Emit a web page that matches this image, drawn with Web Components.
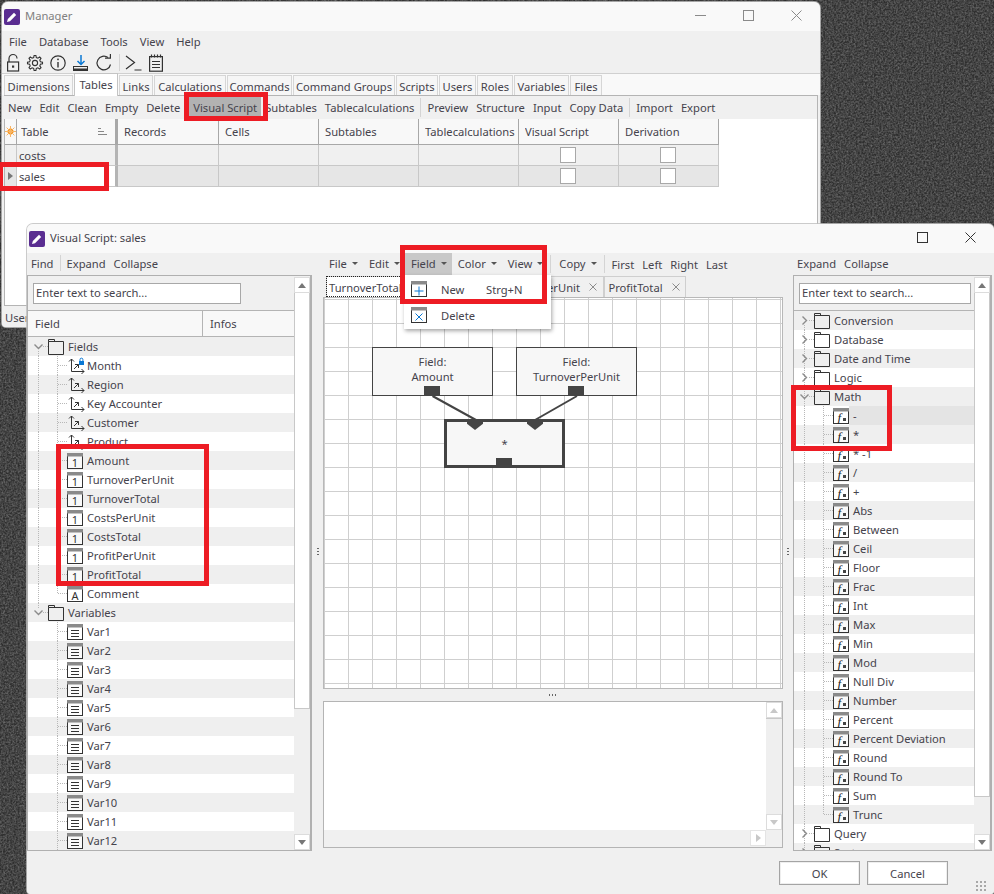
<!DOCTYPE html>
<html>
<head>
<meta charset="utf-8">
<title>Manager</title>
<style>
  html, body { margin: 0; height: 100%; overflow: hidden; }
  body { font: 11.2px "Noto Sans", "Open Sans", sans-serif; color: #45434c; }
</style>
</head>
<body>
<x-desktop>

  <x-window title-text="Manager" dim style="left:2px;top:2px;width:818px;height:325px">
    <x-bar h="21" style="padding-left:1px">
      <x-tool menu>File</x-tool><x-tool menu>Database</x-tool><x-tool menu>Tools</x-tool><x-tool menu>View</x-tool><x-tool menu>Help</x-tool>
    </x-bar>
    <x-iconbar></x-iconbar>
    <x-tabstrip>
      <x-tab style="width:69px">Dimensions</x-tab><x-tab active style="width:44px">Tables</x-tab><x-tab style="width:34px">Links</x-tab><x-tab style="width:72px">Calculations</x-tab><x-tab style="width:65px">Commands</x-tab><x-tab style="width:102px">Command Groups</x-tab><x-tab style="width:42px">Scripts</x-tab><x-tab style="width:37px">Users</x-tab><x-tab style="width:36px">Roles</x-tab><x-tab style="width:55px">Variables</x-tab><x-tab style="width:32px">Files</x-tab>
    </x-tabstrip>
    <x-content>
      <x-bar h="23" style="margin-left:-1px">
        <x-tool>New</x-tool><x-tool>Edit</x-tool><x-tool>Clean</x-tool><x-tool>Empty</x-tool><x-tool>Delete</x-tool><x-sep></x-sep>
        <x-tool active>Visual Script</x-tool><x-tool>Subtables</x-tool><x-tool>Tablecalculations</x-tool><x-sep></x-sep>
        <x-tool>Preview</x-tool><x-tool>Structure</x-tool><x-tool>Input</x-tool><x-tool>Copy Data</x-tool><x-sep></x-sep>
        <x-tool>Import</x-tool><x-tool>Export</x-tool>
      </x-bar>
      <x-table></x-table>
    </x-content>
    <x-status>User</x-status>
  </x-window>

  <x-window title-text="Visual Script: sales" modal style="left:27px;top:224px;width:967px;height:670px">
    <x-dialog-body>
      <x-panel slot="left" columns="Field,Infos" thumb="416">
        <x-bar slot="bar" h="22" style="padding-bottom:2px">
          <x-tool>Find</x-tool><x-sep></x-sep><x-tool>Expand</x-tool><x-tool>Collapse</x-tool>
        </x-bar>
        <x-tree id="fields"></x-tree>
      </x-panel>

      <x-middle slot="middle">
        <x-bar slot="bar" h="22">
          <x-tool drop>File</x-tool><x-tool drop>Edit</x-tool><x-tool drop active>Field</x-tool><x-tool drop>Color</x-tool><x-tool drop>View</x-tool><x-sep></x-sep>
          <x-tool drop>Copy</x-tool><x-sep style="margin-right:3px"></x-sep>
          <x-tool>First</x-tool><x-tool>Left</x-tool><x-tool>Right</x-tool><x-tool>Last</x-tool>
        </x-bar>
        <x-tabstrip slot="tabs" small>
          <x-tab focus closable style="width:78px">TurnoverTotal</x-tab><x-tab closable style="width:85px;visibility:hidden"></x-tab><x-tab closable style="width:115px;justify-content:flex-end">erUnit</x-tab><x-tab closable style="width:82px">ProfitTotal</x-tab>
        </x-tabstrip>
        <x-canvas slot="canvas">
          <x-node x="48" y="49" w="121" h="49">Field:<br>Amount</x-node>
          <x-node x="192" y="49" w="121" h="49">Field:<br>TurnoverPerUnit</x-node>
          <x-node x="120" y="121" w="121" h="49" sel>*</x-node>
        </x-canvas>
        <x-editor slot="editor"></x-editor>
      </x-middle>

      <x-panel slot="right" thumb="504">
        <x-bar slot="bar" h="22" style="padding-bottom:2px">
          <x-tool>Expand</x-tool><x-tool>Collapse</x-tool>
        </x-bar>
        <x-tree id="funcs"></x-tree>
      </x-panel>

      <x-btn slot="footer">OK</x-btn>
      <x-btn slot="footer">Cancel</x-btn>
    </x-dialog-body>
    <x-menu style="left:377px;top:51px"></x-menu>
  </x-window>

  <x-mark style="left:-2px;top:162px;width:111px;height:29px"></x-mark>
  <x-mark style="left:184px;top:92px;width:84px;height:29px"></x-mark>
  <x-mark style="left:400px;top:245px;width:147px;height:59px"></x-mark>
  <x-mark style="left:56px;top:444px;width:153px;height:142px"></x-mark>
  <x-mark style="left:791px;top:385px;width:101px;height:66px"></x-mark>
</x-desktop>

<script>
// gear outline, generated so the teeth stay even
function gearPath(cx, cy, r1, r2, n) {
  let d = '';
  for (let i = 0; i < n; i++) {
    const a = (i / n) * Math.PI * 2, w = Math.PI / n / 2;
    const pts = [[r1, a - w * 1.2], [r2, a - w * 0.6], [r2, a + w * 0.6], [r1, a + w * 1.2]];
    pts.forEach((p, k) => {
      d += (i === 0 && k === 0 ? 'M' : 'L') + (cx + p[0] * Math.cos(p[1])).toFixed(1) + ' ' + (cy + p[0] * Math.sin(p[1])).toFixed(1);
    });
  }
  return d + 'Z';
}

const frame = (inner) => `<svg width="16" height="16" viewBox="0 0 16 16"><rect x=".5" y=".5" width="15" height="15" fill="#fff" fill-opacity=".6" stroke="#333"/><rect width="16" height="3.5" fill="#8a8a8a"/>${inner}</svg>`;
const glyph = (t) => `<text x="8" y="14" text-anchor="middle" font-family="Noto Sans, sans-serif" font-size="11" fill="#333">${t}</text>`;
const axes = `<path d="M4.5 1v12.5H17M2 3.5l2.5-2.5L7 3.5M14.5 11l2.5 2.5-2.5 2.5"/><path d="M7 11l4.5-4.5M8 6.5h3.5V10"/>`;

const ICONS = {
  lock: `<svg width="16" height="20" viewBox="0 0 16 20" fill="none" stroke="#333" stroke-width="1.2"><path d="M4 9V5.5a4 4 0 0 1 8 0"/><rect x="2.6" y="9" width="11" height="9"/><rect x="7" y="12.5" width="2.2" height="2.2" fill="#333" stroke="none"/></svg>`,
  gear: `<svg width="18" height="20" viewBox="0 0 18 20" fill="none" stroke="#333" stroke-width="1.1"><path d="${gearPath(9, 10, 5.6, 7.6, 8)}"/><circle cx="9" cy="10" r="2.6"/></svg>`,
  info: `<svg width="18" height="20" viewBox="0 0 18 20" fill="none" stroke="#333" stroke-width="1.2"><circle cx="9" cy="10" r="7.2"/><path d="M9 9v5.5" stroke-width="1.4"/><rect x="8.2" y="5.6" width="1.6" height="1.6" fill="#333" stroke="none"/></svg>`,
  download: `<svg width="18" height="20" viewBox="0 0 18 20" fill="none"><path d="M9 2v9M5.5 8l3.5 3.5L12.5 8" stroke="#0a78d4" stroke-width="1.5"/><rect x="1.5" y="13.5" width="14" height="4" stroke="#333" stroke-width="1"/><rect x="1.5" y="15.5" width="14" height="2" fill="#333"/></svg>`,
  refresh: `<svg width="18" height="20" viewBox="0 0 18 20" fill="none" stroke="#333" stroke-width="1.2"><path d="M15.5 11.5A6.8 6.8 0 1 1 13 4.6"/><path d="M10 5.2h5.4V1"/></svg>`,
  terminal: `<svg width="18" height="20" viewBox="0 0 18 20" fill="none" stroke="#333" stroke-width="1.2"><path d="M1 3l8.5 6.5L1 16"/><path d="M9.5 17h7"/></svg>`,
  note: `<svg width="16" height="20" viewBox="0 0 16 20" fill="none" stroke="#333" stroke-width="1.2"><rect x="1.6" y="3.6" width="12.8" height="14.6"/><path d="M3.5 1.5v3M6.5 1.5v3M9.5 1.5v3M12.5 1.5v3M4 8.5h8M4 11.5h8M4 14.5h8"/></svg>`,
  folder: `<svg width="16" height="16" viewBox="0 0 16 16" fill="none" stroke="#333"><path d="M.5 2.5V15.5H15.5V2.5ZM.5 2.5V.5H6.5V2.5"/></svg>`,
  dim: `<svg width="18" height="16" viewBox="0 0 18 16" fill="none" stroke="#333" style="margin-right:-2px">${axes}</svg>`,
  dimlock: `<svg width="18" height="16" viewBox="0 0 18 16" fill="none" stroke="#333" style="margin-right:-2px;overflow:visible">${axes}<rect x="12" y="3" width="5" height="4" fill="#0a78d4" stroke="none"/><path d="M13 3.2V1.6a1.4 1.4 0 0 1 2.9 0v1.6" stroke="#0a78d4"/></svg>`,
  num: frame(glyph('1')),
  alpha: frame(glyph('A')),
  vars: frame('<path d="M4 6.5h8M4 9.5h8M4 12.5h8" stroke="#333"/>'),
  fx: frame(`<text x="4.5" y="13.5" font-family="Liberation Serif, serif" font-style="italic" font-size="13" fill="#222">f</text><rect x="10" y="10" width="3" height="3" fill="#444"/>`),
  plus: `<svg width="16" height="16" viewBox="0 0 16 16"><rect x=".5" y=".5" width="15" height="15" fill="#fff" stroke="#333"/><rect width="16" height="3.5" fill="#8a8a8a"/><path d="M8 5.5v9M3.5 10h9" stroke="#0a78d4"/></svg>`,
  cross: `<svg width="16" height="16" viewBox="0 0 16 16"><rect x=".5" y=".5" width="15" height="15" fill="#fff" stroke="#333"/><rect width="16" height="3.5" fill="#8a8a8a"/><path d="M4.5 6.5l7 7M11.5 6.5l-7 7" stroke="#0a78d4"/></svg>`
};

class XDesktop extends HTMLElement {
  constructor() {
    super();
    this.attachShadow({mode: 'open'});
    this.shadowRoot.innerHTML = `
      <style>
        :host { display: block; position: relative; width: 994px; height: 894px; overflow: hidden; background: #3c3c3c; }
        svg { position: absolute; inset: 0; }
      </style>
      <svg width="994" height="894">
        <filter id="grain"><feTurbulence type="fractalNoise" baseFrequency=".55" numOctaves="3" seed="4"/>
          <feColorMatrix values="0 0 0 0 .24  0 0 0 0 .24  0 0 0 0 .24  1.1 0 0 0 -.3"/></filter>
        <rect width="994" height="894" fill="#2e2e2e"/>
        <rect width="994" height="894" fill="#6a6a6a" filter="url(#grain)"/>
      </svg>
      <slot></slot>`;
  }
}

class XWindow extends HTMLElement {
  constructor() {
    super();
    this.attachShadow({mode: 'open'});
    this.shadowRoot.innerHTML = `
      <style>
        :host { display: flex; flex-direction: column; position: absolute; background: #f0f0f0; border-radius: 6px 6px 4px 4px; overflow: hidden; box-shadow: 0 0 0 1px rgba(190,190,190,.8); }
        header { flex: none; height: 29px; display: flex; align-items: center; background: #f9f9f9; padding-left: 2px; }
        .logo { width: 16px; height: 16px; margin-right: 5px; border-radius: 2px; background: #5a2d91; display: flex; align-items: center; justify-content: center; }
        .name { flex: 1; padding-bottom: 3px; }
        .ctl { display: flex; align-items: center; }
        .ctl svg { display: block; stroke: currentColor; fill: none; }
        .ctl span { width: 48px; height: 29px; display: flex; align-items: center; justify-content: center; padding-bottom: 2px; box-sizing: border-box; }
        :host([dim]) .name { color: #808080; }
        :host([dim]) .ctl { color: #8a8a8a; }
        :host([modal]) .ctl { color: #333; }
        main { flex: 1; min-height: 0; display: flex; flex-direction: column; }
      </style>
      <header>
        <span class="logo"><svg width="12" height="12" viewBox="0 0 12 12"><path d="M1 11l.8-3L8 1.8 10.2 4 4 10.2z" fill="#fff"/></svg></span>
        <span class="name"></span>
        <span class="ctl">
          <span class="min"><svg width="11" height="11"><path d="M0 5.5h11"/></svg></span>
          <span><svg width="11" height="11"><rect x=".5" y=".5" width="10" height="10"/></svg></span>
          <span><svg width="11" height="11"><path d="M.5 .5l10 10M10.5 .5l-10 10"/></svg></span>
        </span>
      </header>
      <main><slot></slot></main>`;
  }
  connectedCallback() {
    this.shadowRoot.querySelector('.name').textContent = this.getAttribute('title-text');
    if (this.hasAttribute('modal')) {
      this.shadowRoot.querySelector('.min').style.display = 'none';
    }
  }
}

class XBar extends HTMLElement {
  constructor() {
    super();
    this.attachShadow({mode: 'open'});
    this.shadowRoot.innerHTML = `
      <style>
        :host { display: flex; flex: none; align-items: stretch; background: #f0f0f0; white-space: nowrap; box-sizing: border-box; }
      </style>
      <slot></slot>`;
  }
  connectedCallback() {
    this.style.height = (this.getAttribute('h') || 22) + 'px';
  }
}

class XTool extends HTMLElement {
  constructor() {
    super();
    this.attachShadow({mode: 'open'});
    this.shadowRoot.innerHTML = `
      <style>
        :host { display: flex; align-items: center; padding: 0 4px; }
        :host([menu]) { padding: 0 6px; }
        :host([active]) { background: #b2b2b2; }
        :host([drop]) { padding: 0 5px 2px 6px; gap: 5px; }
        :host([drop][active]) { background: #c8c8c8; }
        i { display: none; width: 0; height: 0; border: 3px solid transparent; border-top: 3px solid #555; border-bottom: 0; }
        :host([drop]) i { display: block; }
      </style>
      <slot></slot><i></i>`;
  }
}

class XSep extends HTMLElement {
  constructor() {
    super();
    this.attachShadow({mode: 'open'});
    this.shadowRoot.innerHTML = `
      <style>
        :host { display: block; width: 1px; margin: 2px 2px; background: #d4d4d4; flex: none; }
      </style>`;
  }
}

class XIconbar extends HTMLElement {
  constructor() {
    super();
    this.attachShadow({mode: 'open'});
    const names = ['lock', 'gear', 'info', 'download', 'refresh', 'terminal', 'note'];
    this.shadowRoot.innerHTML = `
      <style>
        :host { display: flex; flex: none; height: 21px; padding-left: 3px; gap: 5px; align-items: center; background: #f0f0f0; border-bottom: 1px solid #d0d0d0; }
        svg { display: block; }
        b { width: 1px; height: 17px; background: #d4d4d4; margin: 0 0 0 1px; }
      </style>
      ${names.map(n => (n === 'terminal' ? '<b></b>' : '') + ICONS[n]).join('')}`;
  }
}

class XTabstrip extends HTMLElement {
  constructor() {
    super();
    this.attachShadow({mode: 'open'});
    this.shadowRoot.innerHTML = `
      <style>
        :host { display: flex; flex: none; height: 21px; padding-left: 2px; gap: 1px; align-items: flex-end; background: #f9f9f9; position: relative; z-index: 1; }
        :host([small]) { height: 22px; background: #f0f0f0; padding-left: 3px; gap: 0; }
      </style>
      <slot></slot>`;
  }
}

class XTab extends HTMLElement {
  constructor() {
    super();
    this.attachShadow({mode: 'open'});
    this.shadowRoot.innerHTML = `
      <style>
        :host { display: flex; flex: none; align-items: center; justify-content: center; height: 20px; padding-top: 1px; box-sizing: border-box; white-space: nowrap; background: #f6f6f6; border: 1px solid #d6d6d6; border-bottom: 0; }
        :host([active]) { height: 23px; margin-bottom: -1px; padding-top: 0; padding-bottom: 2px; background: #fff; border-color: #c4c4c4; }
        :host([focus]) { height: 22px; background: #fff; outline: 1px dotted #222; outline-offset: -1px; border-color: transparent; justify-content: flex-start; padding-left: 2px !important; }
        svg { display: none; flex: none; }
        :host([closable]) { height: 21px; background: #f0f0f0; border-color: #cfcfcf; padding: 0 6px 0 4px; gap: 9px; }
        :host([focus][closable]) { background: #fff; }
        :host([closable]) svg { display: block; }
        :host([focus]) svg { display: none; }
      </style>
      <slot></slot><svg width="8" height="8"><path d="M.5 .5l7 7M7.5 .5l-7 7" stroke="#8c8c8c"/></svg>`;
  }
}

class XContent extends HTMLElement {
  constructor() {
    super();
    this.attachShadow({mode: 'open'});
    this.shadowRoot.innerHTML = `
      <style>
        :host { display: flex; flex-direction: column; flex: none; height: 211px; margin: 0 2px; border: 1px solid #b4b4b4; background: #fff; box-sizing: border-box; }
      </style>
      <slot></slot>`;
  }
}

class XTable extends HTMLElement {
  constructor() {
    super();
    this.attachShadow({mode: 'open'});
    const cols = ['Records', 'Cells', 'Subtables', 'Tablecalculations', 'Visual Script', 'Derivation'];
    const row = (name, cur, shade) => `
      <div class="ind ${shade}">${cur ? '<u></u>' : ''}</div>
      <div class="name ${cur ? 'cur' : shade}">${name}</div>
      <div class="c ${shade}"></div><div class="c ${shade}"></div><div class="c ${shade}"></div><div class="c ${shade}"></div>
      <div class="c ${shade}"><s></s></div><div class="c ${shade}"><s></s></div>`;
    this.shadowRoot.innerHTML = `
      <style>
        :host { display: grid; grid-template-columns: 12px 101px 101px repeat(5, 100px); grid-template-rows: 26px 21px 21px; width: max-content; }
        div { box-sizing: border-box; border-right: 1px solid #c8c8c8; border-bottom: 1px solid #c8c8c8; display: flex; align-items: center; min-width: 0; overflow: hidden; white-space: nowrap; }
        .h { background: #f8f8f8; border-color: #a8a8a8; padding-left: 6px; justify-content: flex-start; }
        .h span { overflow: hidden; }
        .first { padding-left: 4px; justify-content: space-between; padding-right: 8px; border-right: 3px solid #a8a8a8; }
        .ind { background: #f4f4f4; justify-content: center; padding: 0; }
        .name { padding-left: 2px; border-right: 3px solid #b4b4b4; }
        .a { background: #f0f0f0; } .b { background: #e6e6e6; } .cur { background: #fff; }
        .c { justify-content: center; }
        s { display: block; width: 16px; height: 16px; box-sizing: border-box; background: #fff; border: 1px solid #a8a8a8; margin-right: 1px; }
        u { display: block; width: 0; height: 0; border: 4px solid transparent; border-left: 5px solid #777; border-right: 0; }
        svg { display: block; }
      </style>
      <div class="h" style="padding:0;justify-content:center"><svg width="11" height="11" viewBox="0 0 11 11"><circle cx="5.5" cy="5.5" r="3" fill="#f7941d"/><path d="M5.5 0v11M0 5.5h11M1.6 1.6l7.8 7.8M9.4 1.6l-7.8 7.8" stroke="#f7b565"/></svg></div>
      <div class="h first"><span>Table</span><svg width="9" height="7"><path d="M0 .5h3M0 3.5h6M0 6.5h9" stroke="#888"/></svg></div>
      ${cols.map(c => `<div class="h"><span>${c}</span></div>`).join('')}
      ${row('costs', false, 'a')}
      ${row('sales', true, 'b')}`;
  }
}

class XStatus extends HTMLElement {
  constructor() {
    super();
    this.attachShadow({mode: 'open'});
    this.shadowRoot.innerHTML = `
      <style>
        :host { display: block; padding: 4px 3px; background: #f0f0f0; }
      </style>
      <slot></slot>`;
  }
}

class XDialogBody extends HTMLElement {
  constructor() {
    super();
    this.attachShadow({mode: 'open'});
    this.shadowRoot.innerHTML = `
      <style>
        :host { display: grid; flex: 1; min-height: 0; grid-template-columns: 285px 11px 460px 10px 199px; grid-template-rows: 598px 1fr; background: #f0f0f0; }
        .split { display: flex; align-items: center; justify-content: center; }
        .split i { width: 2px; height: 8px; background: repeating-linear-gradient(#666 0 1px, transparent 1px 3px); }
        footer { grid-column: 1 / -1; display: flex; justify-content: flex-end; gap: 7px; padding: 10px 44px 0 0; box-sizing: border-box; position: relative; }
        .grip { position: absolute; right: 4px; bottom: 3px; width: 12px; height: 10px; background: radial-gradient(circle at 1px 1px, #a8a8a8 1px, transparent 1.2px) 0 0 / 4px 4px; }
      </style>
      <slot name="left"></slot>
      <div class="split"><i></i></div>
      <slot name="middle"></slot>
      <div class="split"><i></i></div>
      <slot name="right"></slot>
      <footer><slot name="footer"></slot><div class="grip"></div></footer>`;
  }
}

class XScrollbar extends HTMLElement {
  constructor() {
    super();
    this.attachShadow({mode: 'open'});
    this.shadowRoot.innerHTML = `
      <style>
        :host { display: flex; flex-direction: column; flex: none; width: 16px; background: #efefef; }
        .btn { flex: none; height: 16px; background: #fff; display: flex; align-items: center; justify-content: center; border: 1px solid #dcdcdc; box-sizing: border-box; }
        .thumb { flex: none; background: #fff; border: 1px solid #c8c8c8; border-width: 0 1px 1px; box-sizing: border-box; }
        .gap { flex: 1; }
        .up { width: 0; height: 0; border: 4px solid transparent; border-top: 0; border-bottom: 5px solid var(--arrow, #777); }
        .dn { width: 0; height: 0; border: 4px solid transparent; border-bottom: 0; border-top: 5px solid var(--arrow, #777); }
      </style>
      <div class="btn"><i class="up"></i></div>
      <div class="thumb"></div>
      <div class="gap"></div>
      <div class="btn"><i class="dn"></i></div>`;
  }
  set thumb(v) {
    this.shadowRoot.querySelector('.thumb').style.height = v + 'px';
  }
}

class XPanel extends HTMLElement {
  constructor() {
    super();
    this.attachShadow({mode: 'open'});
    this.shadowRoot.innerHTML = `
      <style>
        :host { display: flex; flex-direction: column; min-height: 0; min-width: 0; }
        .frame { flex: 1; min-height: 0; display: flex; border: solid #b0b0b0; border-width: 1px 0 1px 1px; }
        .left { flex: 1; min-width: 0; display: flex; flex-direction: column; }
        .search { flex: none; height: 35px; padding: 7px 0 0 5px; box-sizing: border-box; border-bottom: 1px solid #b4b4b4; }
        .search span { display: block; box-sizing: border-box; height: 21px; line-height: 18px; padding-left: 2px; background: #fff; border: 1px solid #a8a8a8; }
        .head { flex: none; height: 26px; display: none; background: #f8f8f8; border-bottom: 1px solid #b4b4b4; box-sizing: border-box; }
        .head span { display: flex; align-items: center; padding-left: 7px; border-right: 1px solid #b4b4b4; box-sizing: border-box; }
        .head span:first-child { width: 175px; } .head span:last-child { flex: 1; border: 0; }
        .body { flex: 1; min-height: 0; overflow: hidden; background: #fff; }
        .sb { width: 18px; flex: none; border-right: 2px solid #b0b0b0; box-sizing: border-box; padding-top: 1px; display: flex; }
      </style>
      <slot name="bar"></slot>
      <div class="frame">
        <div class="left">
          <div class="search"><span class="input">Enter text to search...</span></div>
          <div class="head"></div>
          <div class="body"><slot></slot></div>
        </div>
        <div class="sb"><x-scrollbar></x-scrollbar></div>
      </div>`;
  }
  connectedCallback() {
    const cols = this.getAttribute('columns');
    const s = this.shadowRoot;
    s.querySelector('x-scrollbar').thumb = this.getAttribute('thumb');
    if (cols) {
      const head = s.querySelector('.head');
      head.style.display = 'flex';
      head.innerHTML = cols.split(',').map(c => `<span>${c}</span>`).join('');
      s.querySelector('.input').style.width = '208px';
    } else {
      s.querySelector('.input').style.width = '172px';
    }
  }
}

class XTree extends HTMLElement {
  constructor() {
    super();
    this.attachShadow({mode: 'open'});
    this.shadowRoot.innerHTML = `
      <style>
        :host { display: block; }
      </style>
      <slot></slot>`;
  }
}

class XTreeRow extends HTMLElement {
  constructor() {
    super();
    this.attachShadow({mode: 'open'});
    this.shadowRoot.innerHTML = `
      <style>
        :host { display: flex; align-items: center; height: 19px; background: #fff; white-space: nowrap; overflow: hidden; }
        :host([alt]) { background: #efefef; }
        svg { display: block; flex: none; }
        .guide, .ico { flex: none; display: block; }
        .lab { flex: 1; align-self: stretch; display: flex; align-items: center; padding-left: 4px; }
        :host([selected]) .lab { background: #e4e4e4; }
      </style>
      <span class="guide"></span><span class="ico"></span><span class="lab"><slot></slot></span>`;
  }
  connectedCallback() {
    const lvl = +this.getAttribute('level');
    const open = this.getAttribute('state');
    const cont = this.hasAttribute('cont');
    const last = this.hasAttribute('last');
    const first = this.hasAttribute('first');
    const dot = 'stroke="#b8b8b8" stroke-dasharray="1 1"';
    let g = '';
    if (lvl === 0) {
      if (!first || cont) g += `<path d="M10.5 ${first ? 14 : 0}V${cont ? 19 : 5}" ${dot}/>`;
      g += `<path d="M15 9.5h5" ${dot}/>`;
      g += open === 'open'
        ? `<path d="M6.5 7.5l4 4 4-4" fill="none" stroke="#8c8c8c" stroke-width="1.4"/>`
        : `<path d="M8.5 5.5l4 4-4 4" fill="none" stroke="#8c8c8c" stroke-width="1.4"/>`;
      g = `<svg width="20" height="19">${g}</svg>`;
    } else {
      if (cont) g += `<path d="M10.5 0V19" ${dot}/>`;
      g += `<path d="M29.5 0V${last ? 10 : 19}M30 9.5h9" ${dot}/>`;
      g = `<svg width="39" height="19">${g}</svg>`;
    }
    this.shadowRoot.querySelector('.guide').innerHTML = g;
    this.shadowRoot.querySelector('.ico').innerHTML = ICONS[this.getAttribute('icon')];
  }
}

class XMiddle extends HTMLElement {
  constructor() {
    super();
    this.attachShadow({mode: 'open'});
    this.shadowRoot.innerHTML = `
      <style>
        :host { display: flex; flex-direction: column; min-height: 0; min-width: 0; }
        .split { flex: none; height: 12px; display: flex; align-items: center; justify-content: center; }
        .split i { width: 8px; height: 2px; background: repeating-linear-gradient(90deg, #666 0 1px, transparent 1px 3px); }
      </style>
      <slot name="bar"></slot>
      <slot name="tabs"></slot>
      <slot name="canvas"></slot>
      <div class="split"><i></i></div>
      <slot name="editor"></slot>`;
  }
}

class XCanvas extends HTMLElement {
  constructor() {
    super();
    this.attachShadow({mode: 'open'});
    this.shadowRoot.innerHTML = `
      <style>
        :host { display: block; flex: none; height: 392px; box-sizing: border-box; position: relative; overflow: hidden; border: 1px solid #b8b8b8;
          background-color: #fff;
          background-image: linear-gradient(90deg, #cfcfcf 1px, transparent 1px), linear-gradient(#cfcfcf 1px, transparent 1px);
          background-size: 24px 24px; background-position: 0 1px; }
        svg { position: absolute; left: 0; top: 0; }
      </style>
      <svg width="458" height="390"><path d="M108.5 98L152 122M253 98L211 122" stroke="#444" stroke-width="2" fill="none"/></svg>
      <slot></slot>`;
  }
}

class XNode extends HTMLElement {
  constructor() {
    super();
    this.attachShadow({mode: 'open'});
    this.shadowRoot.innerHTML = `
      <style>
        :host { position: absolute; box-sizing: border-box; display: flex; align-items: center; justify-content: center; text-align: center; line-height: 15px; background: #f7f7f7; border: 1px solid #444; padding-bottom: 6px; }
        :host([sel]) { border: 3px solid #444; padding-bottom: 0; }
        .out { position: absolute; width: 16px; height: 9px; background: #444; bottom: 0; }
        .in { position: absolute; top: -1px; width: 16px; height: 9px; background: #444; clip-path: polygon(0 0, 100% 0, 100% 30%, 50% 100%, 0 30%); display: none; }
        :host([sel]) .in { display: block; }
        :host([sel]) .out { height: 7px; }
      </style>
      <i class="in"></i><i class="in"></i>
      <span><slot></slot></span>
      <i class="out"></i>`;
  }
  connectedCallback() {
    this.style.left = this.getAttribute('x') + 'px';
    this.style.top = this.getAttribute('y') + 'px';
    this.style.width = this.getAttribute('w') + 'px';
    this.style.height = this.getAttribute('h') + 'px';
    const b = this.hasAttribute('sel') ? 3 : 1;
    this.shadowRoot.querySelector('.out').style.left = (52 - b) + 'px';
    this.shadowRoot.querySelectorAll('.in').forEach((n, i) => { n.style.left = (i ? 83 - b : 23 - b) + 'px'; });
  }
}

class XEditor extends HTMLElement {
  constructor() {
    super();
    this.attachShadow({mode: 'open'});
    this.shadowRoot.innerHTML = `
      <style>
        :host { display: grid; grid-template-columns: 1fr 16px; grid-template-rows: 1fr 17px; border: 1px solid #b4b4b4; background: #fff; box-sizing: border-box; height: 147px; flex: none; --arrow: #c8c8c8; }
        .h { background: #f0f0f0; display: flex; justify-content: flex-end; }
        .h span { width: 16px; height: 16px; background: #fff; border: 1px solid #e4e4e4; box-sizing: border-box; display: flex; align-items: center; justify-content: center; }
        .h i { width: 0; height: 0; border: 4px solid transparent; border-right: 0; border-left: 5px solid #c8c8c8; }
        .c { background: #f0f0f0; }
      </style>
      <div></div>
      <x-scrollbar></x-scrollbar>
      <div class="h"><span><i></i></span></div>
      <div class="c"></div>`;
  }
}

class XBtn extends HTMLElement {
  constructor() {
    super();
    this.attachShadow({mode: 'open'});
    this.shadowRoot.innerHTML = `
      <style>
        :host { display: flex; align-items: center; justify-content: center; width: 81px; height: 24px; box-sizing: border-box; background: #fff; border: 1px solid #a4a4a4; box-shadow: inset 0 0 0 1px #eee; }
      </style>
      <slot></slot>`;
  }
}

class XMenu extends HTMLElement {
  constructor() {
    super();
    this.attachShadow({mode: 'open'});
    this.shadowRoot.innerHTML = `
      <style>
        :host { position: absolute; display: block; width: 147px; padding: 1px 0; background: #fff; box-shadow: 1px 2px 4px rgba(0,0,0,.35); z-index: 5; }
        .r { display: flex; align-items: center; height: 26px; padding-left: 7px; }
        .r svg { flex: none; display: block; }
        .t { width: 45px; margin-left: 14px; }
      </style>
      <div class="r">${ICONS.plus}<span class="t">New</span><span>Strg+N</span></div>
      <div class="r">${ICONS.cross}<span class="t">Delete</span></div>`;
  }
}

class XMark extends HTMLElement {
  constructor() {
    super();
    this.attachShadow({mode: 'open'});
    this.shadowRoot.innerHTML = `
      <style>
        :host { position: absolute; display: block; box-sizing: border-box; border: 5px solid #ed1c24; z-index: 20; pointer-events: none; }
      </style>`;
  }
}

[['x-desktop', XDesktop], ['x-window', XWindow], ['x-bar', XBar], ['x-tool', XTool], ['x-sep', XSep],
 ['x-iconbar', XIconbar], ['x-tabstrip', XTabstrip], ['x-tab', XTab], ['x-content', XContent], ['x-table', XTable],
 ['x-status', XStatus], ['x-dialog-body', XDialogBody], ['x-scrollbar', XScrollbar], ['x-panel', XPanel],
 ['x-tree', XTree], ['x-tree-row', XTreeRow], ['x-middle', XMiddle], ['x-canvas', XCanvas], ['x-node', XNode],
 ['x-editor', XEditor], ['x-btn', XBtn], ['x-menu', XMenu], ['x-mark', XMark]
].forEach(([n, c]) => customElements.define(n, c));

// fill the two trees
function addRows(tree, rows) {
  rows.forEach((r, i) => {
    const el = document.createElement('x-tree-row');
    el.setAttribute('level', r.level);
    el.setAttribute('icon', r.icon);
    if (r.state) el.setAttribute('state', r.state);
    if (r.cont) el.setAttribute('cont', '');
    if (r.last) el.setAttribute('last', '');
    if (r.first) el.setAttribute('first', '');
    if (r.sel) el.setAttribute('selected', '');
    if (i % 2 === 0) el.setAttribute('alt', '');
    el.textContent = r.t;
    tree.appendChild(el);
  });
}

const kids = (names, icon, cont) => names.map(n => ({level: 1, icon, t: n, cont}));
const fieldRows = [
  {level: 0, icon: 'folder', t: 'Fields', state: 'open', cont: true, first: true},
  {level: 1, icon: 'dimlock', t: 'Month', cont: true},
  ...kids(['Region', 'Key Accounter', 'Customer', 'Product'], 'dim', true),
  ...kids(['Amount', 'TurnoverPerUnit', 'TurnoverTotal', 'CostsPerUnit', 'CostsTotal', 'ProfitPerUnit', 'ProfitTotal'], 'num', true),
  {level: 1, icon: 'alpha', t: 'Comment', cont: true, last: true},
  {level: 0, icon: 'folder', t: 'Variables', state: 'open'},
  ...kids(['Var1', 'Var2', 'Var3', 'Var4', 'Var5', 'Var6', 'Var7', 'Var8', 'Var9', 'Var10', 'Var11', 'Var12'], 'vars', false)
];
addRows(document.getElementById('fields'), fieldRows);

const folder = (t, state, first) => ({level: 0, icon: 'folder', t, state: state || 'closed', cont: true, first});
const funcs = kids(['-', '*', '* -1', '/', '+', 'Abs', 'Between', 'Ceil', 'Floor', 'Frac', 'Int', 'Max', 'Min', 'Mod', 'Null Div', 'Number', 'Percent', 'Percent Deviation', 'Round', 'Round To', 'Sum', 'Trunc'], 'fx', true);
funcs[0].sel = true;
funcs[funcs.length - 1].last = true;
addRows(document.getElementById('funcs'), [
  folder('Conversion', 'closed', true), folder('Database'), folder('Date and Time'), folder('Logic'), folder('Math', 'open'),
  ...funcs,
  folder('Query'), folder('Sort')
]);
</script>
</body>
</html>
